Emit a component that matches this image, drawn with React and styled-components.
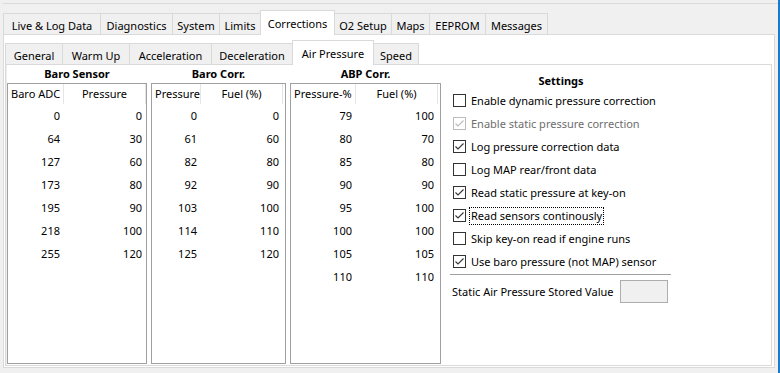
import styled, { createGlobalStyle } from "styled-components";

const GlobalStyle = createGlobalStyle`
  html, body {
    margin: 0;
    padding: 0;
    background: #f0f0f0;
  }
  body {
    font-family: "Noto Sans", "Open Sans", sans-serif;
    font-size: 11px;
    color: #000;
  }
`;
const Screen = styled.div`
  display: flex;
  width: 780px;
  height: 373px;
  overflow: hidden;
  background: #f0f0f0;
`;
const Frame = styled.div`
  flex: 1;
  margin: 3px 0 0 3px;
  border-top: 1px solid #dadada;
  padding-top: 6px;
  display: flex;
  flex-direction: column;
`;
const BlueEdge = styled.div`
  width: 2px;
  background: #1979ca;
`;
const TabStrip = styled.div`
  display: flex;
  align-items: flex-end;
`;
const Tab = styled.div`
  box-sizing: border-box;
  width: ${(p) => p.$w}px;
  height: ${(p) => (p.$active ? p.$h + 4 : p.$h)}px;
  margin-left: -1px;
  margin-bottom: ${(p) => (p.$active ? -1 : 0)}px;
  padding-top: ${(p) => (p.$active ? p.$pad + 1 : p.$pad)}px;
  border: 1px solid #d9d9d9;
  border-bottom: none;
  background: ${(p) => (p.$active ? "#fff" : "#f0f0f0")};
  position: relative;
  z-index: ${(p) => (p.$active ? 2 : 1)};
  text-align: center;
  line-height: 16px;
  white-space: nowrap;
  &:first-child {
    margin-left: 0;
  }
`;
const OuterPage = styled.div`
  box-sizing: border-box;
  width: 772px;
  height: 334px;
  background: #fff;
  border: 1px solid #dadada;
  padding: 5px 2px 1px 1px;
  display: flex;
  flex-direction: column;
`;
const InnerPage = styled.div`
  flex: 1;
  background: #fff;
  border: 1px solid #dadada;
  box-shadow: inset 1px 0 0 #ececec;
  padding: 0 0 1px 1px;
  display: flex;
`;
const Group = styled.div`
  width: ${(p) => p.$w}px;
  margin-right: 4px;
  display: flex;
  flex-direction: column;
`;
const GroupTitle = styled.div`
  height: 18px;
  line-height: 17px;
  text-align: center;
  font-weight: 700;
`;
const ListBox = styled.div`
  flex: 1;
  border: 1px solid #a0a0a0;
  background: #fff;
`;
const HeaderRow = styled.div`
  display: grid;
  grid-template-columns: ${(p) => p.$cols};
  height: 20px;
`;
const HeaderCell = styled.div`
  border-right: 1px solid #e5e5e5;
  line-height: 20px;
  padding: 0 3px;
  text-align: ${(p) => (p.$center ? "center" : "left")};
  white-space: nowrap;
`;
const DataRow = styled.div`
  display: grid;
  grid-template-columns: ${(p) => p.$cols};
  height: 23px;
  line-height: 23px;
`;
const Cell = styled.div`
  text-align: right;
  padding-right: 4px;
`;
const Settings = styled.div`
  margin-left: 2px;
  width: 228px;
  padding-top: 7px;
  display: flex;
  flex-direction: column;
`;
const SettingsTitle = styled.div`
  font-weight: 700;
  text-align: center;
  line-height: 17px;
  height: 17px;
`;
const CheckRow = styled.div`
  display: flex;
  align-items: center;
  height: 23px;
  padding-left: 6px;
  color: ${(p) => (p.$disabled ? "#6d6d6d" : "#000")};
`;
const Box = styled.div`
  box-sizing: border-box;
  width: 13px;
  height: 13px;
  border: 1px solid ${(p) => (p.$disabled ? "#bcbcbc" : "#333")};
  background: #fff;
  margin-right: 3px;
  display: flex;
  align-items: center;
  justify-content: center;
`;
const Label = styled.span`
  border: 1px dotted ${(p) => (p.$focus ? "#000" : "transparent")};
  padding: 0 1px;
  line-height: 16px;
  white-space: nowrap;
`;
const Divider = styled.div`
  height: 1px;
  width: 221px;
  margin-left: 3px;
  margin-top: 1px;
  background: #a0a0a0;
`;
const StoredRow = styled.div`
  display: flex;
  align-items: center;
  margin-top: 5px;
  padding-left: 5px;
  gap: 6px;
`;
const ValueBox = styled.div`
  width: 48px;
  height: 23px;
  box-sizing: border-box;
  border: 1px solid #adadad;
  background: #f0f0f0;
`;

const outerTabs = [
  ["Live & Log Data", 98],
  ["Diagnostics", 73],
  ["System", 48],
  ["Limits", 42],
  ["Corrections", 75, true],
  ["O2 Setup", 58],
  ["Maps", 39],
  ["EEPROM", 57],
  ["Messages", 63],
];
const innerTabs = [
  ["General", 58],
  ["Warm Up", 68],
  ["Acceleration", 83],
  ["Deceleration", 82],
  ["Air Pressure", 82, true],
  ["Speed", 46],
];

const tables = [
  {
    title: "Baro Sensor",
    width: 140,
    cols: "56px 82px 1fr",
    heads: ["Baro ADC", "Pressure"],
    rows: [[0, 0], [64, 30], [127, 60], [173, 80], [195, 90], [218, 100], [255, 120]],
  },
  {
    title: "Baro Corr.",
    width: 135,
    cols: "49px 82px 1fr",
    heads: ["Pressure", "Fuel (%)"],
    rows: [[0, 0], [61, 60], [82, 80], [92, 90], [103, 100], [114, 110], [125, 120]],
  },
  {
    title: "ABP Corr.",
    width: 151,
    cols: "65px 82px 1fr",
    heads: ["Pressure-%", "Fuel (%)"],
    rows: [[79, 100], [80, 70], [85, 80], [90, 90], [95, 100], [100, 100], [105, 105], [110, 110]],
  },
];

const options = [
  { text: "Enable dynamic pressure correction" },
  { text: "Enable static pressure correction", checked: true, disabled: true },
  { text: "Log pressure correction data", checked: true },
  { text: "Log MAP rear/front data" },
  { text: "Read static pressure at key-on", checked: true },
  { text: "Read sensors continously", checked: true, focus: true },
  { text: "Skip key-on read if engine runs" },
  { text: "Use baro pressure (not MAP) sensor", checked: true },
];

function Check({ disabled }) {
  return (
    <svg width="11" height="11" viewBox="0 0 11 11">
      <polyline
        points="1.5,5.5 4,8 9.5,2.5"
        fill="none"
        stroke={disabled ? "#bcbcbc" : "#333"}
        strokeWidth="1.1"
      />
    </svg>
  );
}

function Table({ table }) {
  return (
    <Group $w={table.width}>
      <GroupTitle>{table.title}</GroupTitle>
      <ListBox>
        <HeaderRow $cols={table.cols}>
          <HeaderCell>{table.heads[0]}</HeaderCell>
          <HeaderCell $center>{table.heads[1]}</HeaderCell>
        </HeaderRow>
        {table.rows.map((r, i) => (
          <DataRow $cols={table.cols} key={i}>
            <Cell>{r[0]}</Cell>
            <Cell>{r[1]}</Cell>
          </DataRow>
        ))}
      </ListBox>
    </Group>
  );
}

function App() {
  return (
    <Screen>
      <GlobalStyle />
      <Frame>
        <TabStrip>
          {outerTabs.map(([t, w, a]) => (
            <Tab key={t} $w={w} $h={21} $pad={4} $active={a}>
              {t}
            </Tab>
          ))}
        </TabStrip>
        <OuterPage>
          <TabStrip>
            {innerTabs.map(([t, w, a]) => (
              <Tab key={t} $w={w} $h={21} $pad={4} $active={a}>
                {t}
              </Tab>
            ))}
          </TabStrip>
          <InnerPage>
            {tables.map((t) => (
              <Table table={t} key={t.title} />
            ))}
            <Settings>
              <SettingsTitle>Settings</SettingsTitle>
              {options.map((o) => (
                <CheckRow key={o.text} $disabled={o.disabled}>
                  <Box $disabled={o.disabled}>{o.checked && <Check disabled={o.disabled} />}</Box>
                  <Label $focus={o.focus}>{o.text}</Label>
                </CheckRow>
              ))}
              <Divider />
              <StoredRow>
                <span>Static Air Pressure Stored Value</span>
                <ValueBox />
              </StoredRow>
            </Settings>
          </InnerPage>
        </OuterPage>
      </Frame>
      <BlueEdge />
    </Screen>
  );
}

export default App;
